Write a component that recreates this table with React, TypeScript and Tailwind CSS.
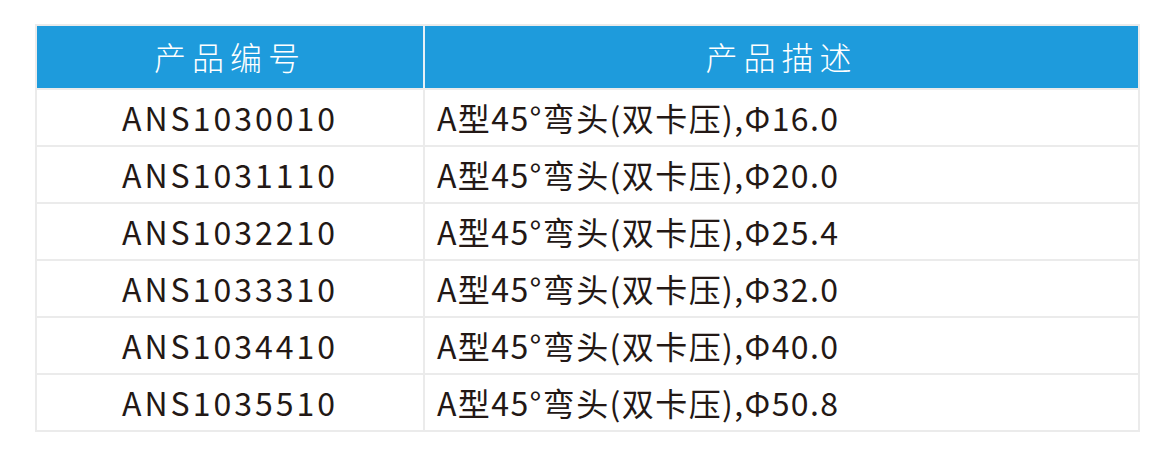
const rows = [
  { code: 'ANS1030010', desc: 'A型45°弯头(双卡压),Φ16.0' },
  { code: 'ANS1031110', desc: 'A型45°弯头(双卡压),Φ20.0' },
  { code: 'ANS1032210', desc: 'A型45°弯头(双卡压),Φ25.4' },
  { code: 'ANS1033310', desc: 'A型45°弯头(双卡压),Φ32.0' },
  { code: 'ANS1034410', desc: 'A型45°弯头(双卡压),Φ40.0' },
  { code: 'ANS1035510', desc: 'A型45°弯头(双卡压),Φ50.8' },
];

export default function App() {
  return (
    <div
      className="w-[1157px] h-[450px] bg-white pl-[35px] pt-[24px]"
      style={{ fontFamily: '"Noto Sans CJK SC", "Noto Sans", sans-serif' }}
    >
      <div className="w-[1105px] border-2 border-[#ebebeb]">
        <div className="grid grid-cols-[388px_1fr] h-[62px] bg-[#1e9bdc] text-white text-[32px] font-light tracking-[6px]">
          <div className="flex items-center justify-center pb-[3px] border-r-2 border-[#e6f0f6]">产品编号</div>
          <div className="flex items-center justify-center pb-[3px]">产品描述</div>
        </div>
        {rows.map((r) => (
          <div
            key={r.code}
            className="grid grid-cols-[388px_1fr] h-[57px] border-t-2 border-[#ebebeb] text-[#231815] text-[32px]"
          >
            <div className="flex items-center justify-center pb-[2px] border-r-2 border-[#ebebeb] tracking-[3px]">
              {r.code}
            </div>
            <div className="flex items-center pl-[12px] pb-[2px] tracking-[1.4px]">{r.desc}</div>
          </div>
        ))}
      </div>
    </div>
  );
}
